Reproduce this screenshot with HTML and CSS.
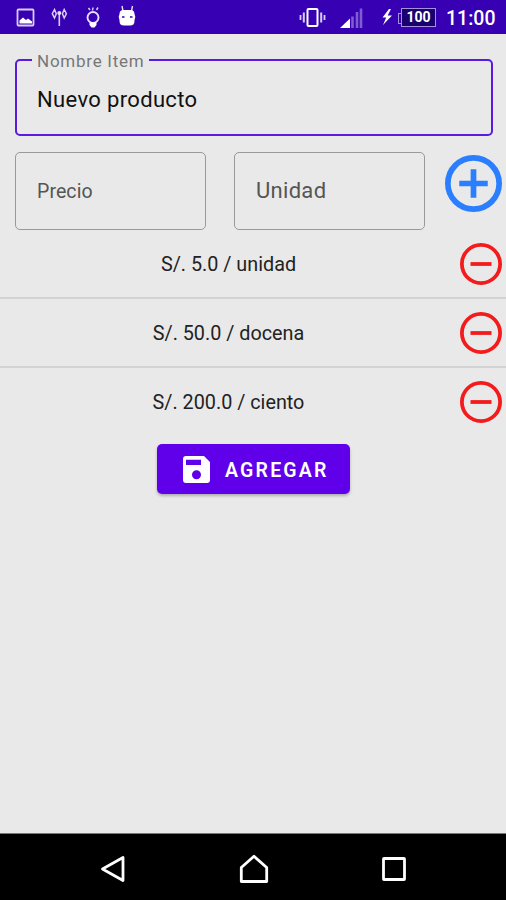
FILE: index.html
```
<!DOCTYPE html>
<html lang="es">
<head>
    <meta charset="UTF-8">
    <meta name="viewport" content="width=device-width, initial-scale=1.0">
    <title>Nuevo producto</title>
    <link rel="stylesheet" href="styles.css">
</head>
<body>

    <div class="screen">
        <header class="status-bar">
            <svg class="status-icons" width="150" height="34" viewBox="0 0 150 34">
                <!-- picture -->
                <rect x="17.500" y="9.500" width="16" height="16" rx="1" fill="none" stroke="#d9ccf4" stroke-width="1.800"/>
                <path d="M19.500 23.500v-3l3.500-3 3 2.500 2-1.500 4 3v2z" fill="#fff"/>
                <!-- antenna -->
                <path d="M59.300 13v13" fill="none" stroke="#d9ccf4" stroke-width="1.600"/>
                <path d="M54.500 9.500L52.300 13.700l2.200 4.300 1.800-4.300zM64.200 9.500l2.200 4.200-2.200 4.300-1.800-4.300z" fill="none" stroke="#d9ccf4" stroke-width="1.500"/>
                <circle cx="59.300" cy="13" r="2" fill="#e8e0fa"/>
                <!-- bulb -->
                <circle cx="93" cy="17.500" r="5.500" fill="none" stroke="#e8e0fa" stroke-width="1.900"/>
                <path d="M89.500 22.500h7v2.500l-2 2.500h-3l-2-2.500z" fill="#fff"/>
                <path d="M88.500 8l1.500 2M93 7.500l-.5 3M98 7.500L96.500 10" stroke="#d9ccf4" stroke-width="1.500"/>
                <!-- robot -->
                <path d="M122 6l1 5M132.500 6l-1 5" stroke="#e8e0fa" stroke-width="1.400"/>
                <path d="M119.500 14q0-4 4-4h7q4 0 4 4l.8 3-.8 3v1q0 4.500-4.500 4.500h-6q-4.500 0-4.500-4.500v-1l-.8-3z" fill="#fff"/>
                <path d="M122 17h2.500M130 17h2.500" stroke="#3700b3" stroke-width="1.500"/>
            </svg>
            <svg class="status-icons" width="92" height="34" viewBox="298 0 92 34">
                <!-- vibrate -->
                <rect x="307.500" y="9" width="10" height="17" rx="1" fill="none" stroke="#fff" stroke-width="2"/>
                <path d="M303.800 12.500v10M321.200 12.500v10" stroke="#d9ccf4" stroke-width="2"/>
                <path d="M300.500 15v5M324.500 15v5" stroke="#d9ccf4" stroke-width="1.800"/>
                <!-- signal -->
                <path d="M340 28l10-9.500V28z" fill="#fff"/>
                <path d="M352.500 16.500V28M357 12V28M361 8.500V28" stroke="#7f5cd0" stroke-width="2.600"/>
                <!-- charging -->
                <path d="M389 9l-6.500 8.500h3.700L383 25l9-9.500h-4.300L391 9z" fill="#fff"/>
            </svg>
            <span class="battery">100</span>
            <span class="clock">11:00</span>
        </header>

        <main class="content">
            <div class="field field-focused">
                <span class="field-label">Nombre Item</span>
                <span class="field-value">Nuevo producto</span>
            </div>

            <div class="field-row">
                <div class="field"><span class="field-hint">Precio</span></div>
                <div class="field"><span class="field-hint field-hint-large">Unidad</span></div>
                <svg class="add-icon" viewBox="2 2 20 20">
                    <circle cx="12" cy="12" r="9"/>
                    <path d="M12 7v10M7 12h10"/>
                </svg>
            </div>

            <ul class="prices">
                <li>
                    <span class="price">S/. 5.0 / unidad</span>
                    <svg class="remove-icon" viewBox="2 2 20 20"><circle cx="12" cy="12" r="9.100"/><path d="M7 12h10"/></svg>
                </li>
                <li>
                    <span class="price">S/. 50.0 / docena</span>
                    <svg class="remove-icon" viewBox="2 2 20 20"><circle cx="12" cy="12" r="9.100"/><path d="M7 12h10"/></svg>
                </li>
                <li>
                    <span class="price">S/. 200.0 / ciento</span>
                    <svg class="remove-icon" viewBox="2 2 20 20"><circle cx="12" cy="12" r="9.100"/><path d="M7 12h10"/></svg>
                </li>
            </ul>

            <button type="button" class="btn-add">
                <svg width="27" height="27" viewBox="3 3 18 18">
                    <path fill="#fff" d="M17 3H5a2 2 0 0 0-2 2v14a2 2 0 0 0 2 2h14a2 2 0 0 0 2-2V7l-4-4zm-5 15.500a3 3 0 1 1 0-6 3 3 0 0 1 0 6zM15 9H5V5.500h10V9z"/>
                </svg>
                <span>AGREGAR</span>
            </button>
        </main>

        <nav class="nav-bar">
            <svg width="28" height="32" viewBox="0 0 28 32"><path d="M24 4.500v23L3.500 16z"/></svg>
            <svg width="32" height="32" viewBox="0 0 32 32"><path d="M3.300 28.500V14.500L16 3.300l12.700 11.200v14z"/></svg>
            <svg width="28" height="32" viewBox="0 0 28 32"><rect x="3.500" y="5.500" width="21" height="21" rx=".5"/></svg>
        </nav>
    </div>

</body>
</html>
```
FILE: styles.css
```
* {
    box-sizing: border-box;
}

body {
    margin: 0;
    font-family: Roboto, "Liberation Sans", sans-serif;
    background-color: #e9e9e9;
}

.screen {
    display: flex;
    flex-direction: column;
    width: 506px;
    height: 900px;
    overflow: hidden;
}

/* status bar */
.status-bar {
    display: flex;
    align-items: center;
    height: 34px;
    background-color: #3700b3;
    color: #fff;
}

.status-icons {
    flex: none;
    overflow: visible;
}

.status-icons + .status-icons {
    margin-left: 148px;
}

.battery {
    width: 35px;
    height: 19px;
    margin-left: 11px;
    border: 1.5px solid #a590dc;
    background-color: #180070;
    font-size: 14px;
    font-weight: 700;
    line-height: 17px;
    text-align: center;
    position: relative;
}

.battery::before {
    content: "";
    position: absolute;
    left: -4px;
    top: 4px;
    width: 3px;
    height: 9px;
    border: 1px solid #a590dc;
    border-right: none;
}

.clock {
    margin: 3px 0 0 10px;
    font-size: 19.5px;
    font-weight: 500;
    white-space: nowrap;
}

/* form */
.content {
    flex: 1;
    padding-top: 25px;
}

.field {
    display: flex;
    align-items: center;
    width: 191px;
    height: 78px;
    padding-left: 21px;
    border: 1px solid #999;
    border-radius: 5px;
    color: #555;
}

.field-focused {
    position: relative;
    width: 478px;
    height: 77px;
    margin-left: 15px;
    padding-left: 20px;
    border: 2px solid #5a1be0;
    color: #111;
}

.field-label {
    position: absolute;
    left: 15px;
    top: -11px;
    padding: 0 5px;
    background-color: #e9e9e9;
    color: #777;
    font-size: 17px;
    line-height: 22px;
    letter-spacing: 0.75px;
    white-space: nowrap;
}

.field-value {
    padding-top: 4px;
    font-size: 22px;
    letter-spacing: 0.35px;
}

.field-row {
    display: flex;
    height: 78px;
    margin: 16px 0 0 15px;
}

.field-row .field + .field {
    margin-left: 28px;
}

.field-hint {
    font-size: 19.5px;
    letter-spacing: 0.1px;
}

.field-hint-large {
    margin-top: -2px;
    font-size: 22px;
    letter-spacing: 0.3px;
}

.add-icon {
    flex: none;
    width: 57px;
    height: 57px;
    margin: 3px 0 0 19.5px;
    fill: none;
    stroke: #2b7fff;
    stroke-width: 2;
}

/* price list */
.prices {
    margin: 0;
    padding: 0;
    list-style: none;
}

.prices li {
    display: flex;
    align-items: center;
    height: 69px;
    padding-right: 4px;
    border-bottom: 2px solid #d3d3d3;
}

.prices li:last-child {
    border-bottom-color: transparent;
}

.price {
    flex: 1;
    padding: 2px 3px 0 0;
    color: #222;
    font-size: 19.8px;
    text-align: center;
}

.remove-icon {
    flex: none;
    width: 42px;
    height: 42px;
    fill: none;
    stroke: #f31b1b;
    stroke-width: 1.8;
}

.btn-add {
    display: flex;
    align-items: center;
    width: 193px;
    height: 50px;
    margin: 7px 0 0 157px;
    padding: 0 0 0 26px;
    border: none;
    border-radius: 5px;
    background-color: #6000ea;
    box-shadow: 0 2px 3px rgba(0, 0, 0, 0.25);
    color: #fff;
    font-family: inherit;
    font-size: 19.5px;
    font-weight: 600;
    letter-spacing: 2.2px;
}

.btn-add span {
    margin: 2px 0 0 15px;
}

/* navigation bar */
.nav-bar {
    display: flex;
    justify-content: space-between;
    align-items: center;
    height: 67px;
    padding: 3px 98px 0 99px;
    border-top: 1px solid #777;
    background-color: #000;
}

.nav-bar svg {
    fill: none;
    stroke: #fff;
    stroke-width: 2.8;
    stroke-linejoin: round;
}
```
